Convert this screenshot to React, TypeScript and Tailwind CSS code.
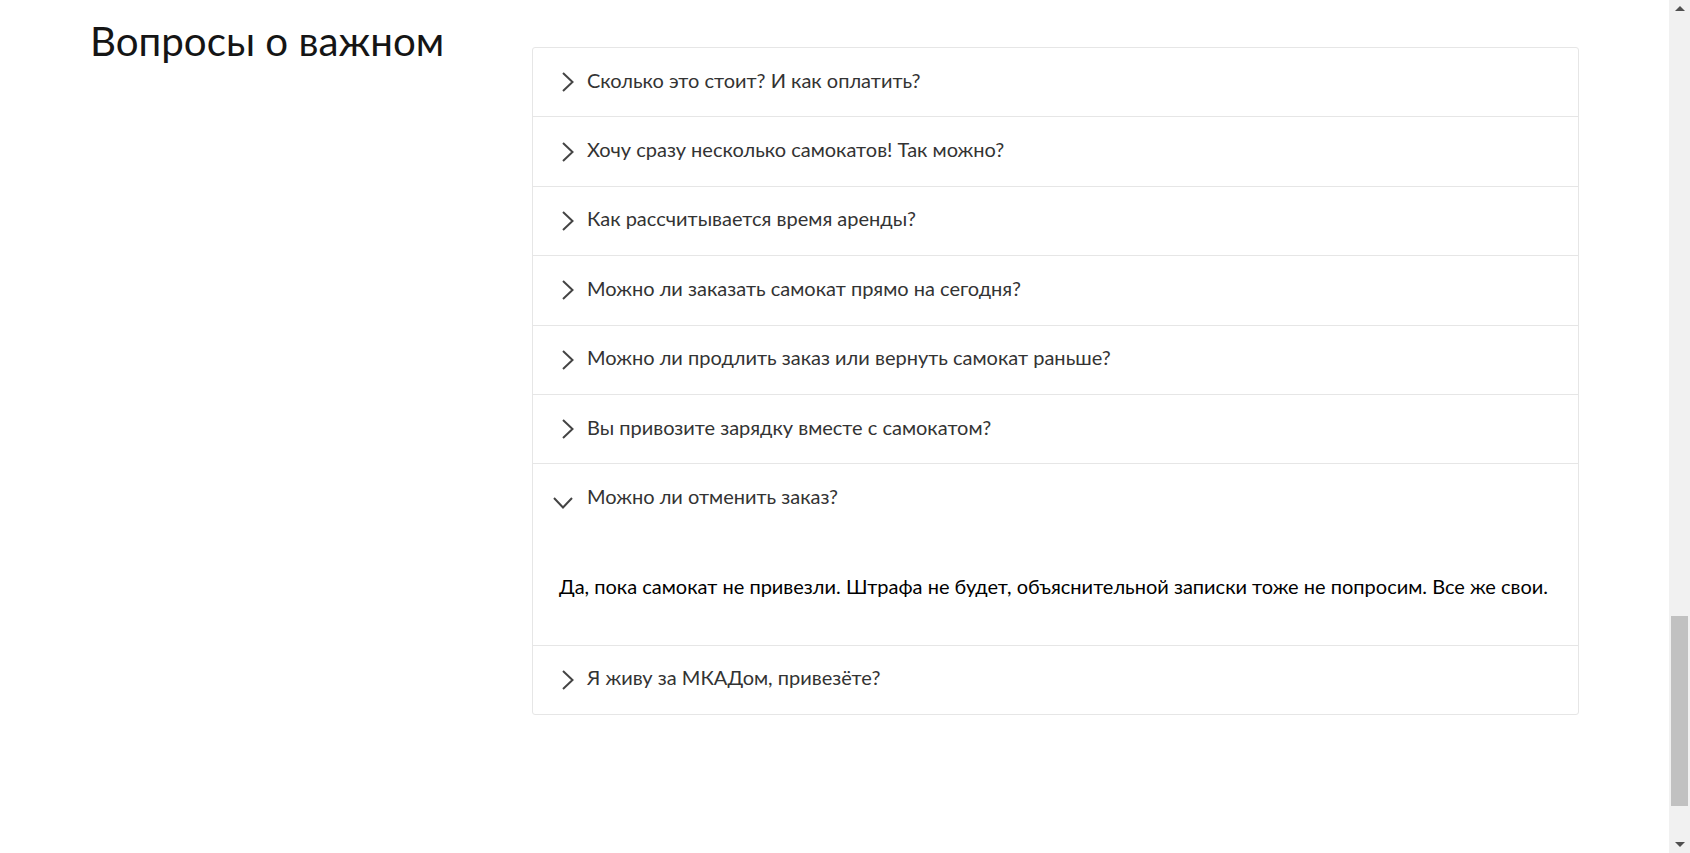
import React from "react";

const questions = [
  "Сколько это стоит? И как оплатить?",
  "Хочу сразу несколько самокатов! Так можно?",
  "Как рассчитывается время аренды?",
  "Можно ли заказать самокат прямо на сегодня?",
  "Можно ли продлить заказ или вернуть самокат раньше?",
  "Вы привозите зарядку вместе с самокатом?",
];

function ChevronRight() {
  return (
    <svg width="12" height="20" viewBox="0 0 12 20" fill="none" className="shrink-0">
      <polyline points="1,1 10.5,10 1,19" stroke="#444" strokeWidth="2" fill="none" />
    </svg>
  );
}

function ChevronDown() {
  return (
    <svg width="20" height="12" viewBox="0 0 20 12" fill="none" className="shrink-0 -ml-[9px] mt-[8px]">
      <polyline points="1,1 10,10.5 19,1" stroke="#444" strokeWidth="2" fill="none" />
    </svg>
  );
}

function Header({ q, open = false }: { q: string; open?: boolean }) {
  return (
    <div className="flex items-center h-[68.4px] pl-[29px]">
      <div className="w-[25px] flex items-center">{open ? <ChevronDown /> : <ChevronRight />}</div>
      <span className="mb-[5px] text-[20px] leading-[24px] text-[#333]">{q}</span>
    </div>
  );
}

function Row({ q, first = false }: { q: string; first?: boolean }) {
  return (
    <div className={first ? "" : "border-t border-[#e6e6e6]"}>
      <Header q={q} />
    </div>
  );
}

export default function App() {
  return (
    <div className="flex h-[853px] w-full overflow-hidden bg-white" style={{ fontFamily: "Lato, 'Noto Sans', sans-serif" }}>
      <div className="flex-1 flex pl-[90px] pt-[17px]">
        <h2 className="w-[442px] shrink-0 text-[40.3px] leading-[48px] font-normal text-[#151515]">Вопросы о важном</h2>
        <div className="mt-[30px] w-[1047px] self-start border border-[#e6e6e6] rounded-[3px]">
          {questions.map((q, i) => (
            <Row key={q} q={q} first={i === 0} />
          ))}
          <div className="border-t border-[#e6e6e6]">
            <Header q="Можно ли отменить заказ?" open />
            <div className="pl-[26px] pt-[41px] pb-[47px] text-[20px] leading-[24px] text-black">
              Да, пока самокат не привезли. Штрафа не будет, объяснительной записки тоже не попросим. Все же свои.
            </div>
          </div>
          <Row q="Я живу за МКАДом, привезёте?" />
        </div>
      </div>
      <div className="w-[21px] shrink-0 bg-[#f1f1f1] flex flex-col items-center">
        <div className="h-[17px] flex items-center justify-center">
          <div className="w-0 h-0 border-l-[5px] border-r-[5px] border-b-[5px] border-l-transparent border-r-transparent border-b-[#505050]" />
        </div>
        <div className="flex-1 w-full flex flex-col items-center">
          <div className="mt-[599px] w-[17px] h-[190px] bg-[#c1c1c1]" />
        </div>
        <div className="h-[17px] flex items-center justify-center">
          <div className="w-0 h-0 border-l-[5px] border-r-[5px] border-t-[5px] border-l-transparent border-r-transparent border-t-[#505050]" />
        </div>
      </div>
    </div>
  );
}
